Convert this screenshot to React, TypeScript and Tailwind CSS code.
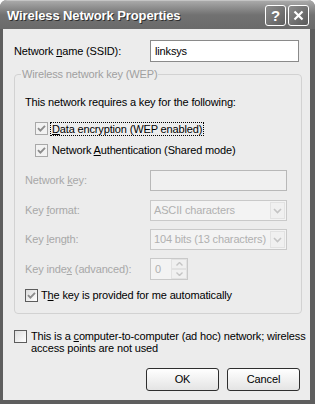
import React from "react";

function Box({ checked, dim }: { checked?: boolean; dim?: boolean }) {
  return (
    <div
      className={
        dim
          ? "w-[13px] h-[13px] shrink-0 border border-[#a8a8a8] bg-[#f2f2f2] flex items-center justify-center"
          : "w-[13px] h-[13px] shrink-0 border border-[#5c5c5c] bg-gradient-to-br from-[#dcdcdc] to-white flex items-center justify-center"
      }
    >
      {checked && (
        <svg width="9" height="9" viewBox="0 0 9 9">
          <path d="M1 4.2 L3.4 6.6 L8 1.8" stroke="#8c8c8c" strokeWidth="1.9" fill="none" />
        </svg>
      )}
    </div>
  );
}

function Combo({ text }: { text: string }) {
  return (
    <div className="w-[137px] h-[21px] border border-[#c9c9c9] bg-[#f3f3f3] flex items-center">
      <span className="flex-1 pl-[3px] text-[#b0b0b0] whitespace-nowrap overflow-hidden">{text}</span>
      <div className="w-[15px] h-[17px] mr-[1px] shrink-0 border border-[#e2e2e2] bg-[#f0f0f0] flex items-center justify-center">
        <svg width="9" height="6" viewBox="0 0 9 6">
          <path d="M1 1 L4.5 4.5 L8 1" stroke="#c4c4c4" strokeWidth="1.6" fill="none" />
        </svg>
      </div>
    </div>
  );
}

export default function App() {
  return (
    <div
      className="w-[315px] h-[404px] flex flex-col rounded-t-[7px] overflow-hidden bg-[#5e5e5e] text-[11px] leading-[13px] tracking-[-0.15px] text-black"
      style={{ fontFamily: '"Liberation Sans", Arial, sans-serif' }}
    >
      {/* Title bar */}
      <div className="h-[29px] shrink-0 flex items-center justify-between pl-[7px] pr-[6px] bg-gradient-to-b from-[#a9a9a9] via-[#717171] to-[#6a6a6a] border-t border-[#c4c4c4]">
        <span className="text-white font-bold text-[13px] [text-shadow:1px_1px_0_#2e2e2e] tracking-[-0.1px]">
          Wireless Network Properties
        </span>
        <div className="flex gap-[2px]">
          <div className="w-[21px] h-[21px] rounded-[3px] border border-white bg-gradient-to-br from-[#8c8c8c] to-[#5e5e5e] flex items-center justify-center">
            <span className="text-white font-bold text-[15px] leading-none">?</span>
          </div>
          <div className="w-[21px] h-[21px] rounded-[3px] border border-white bg-gradient-to-br from-[#8c8c8c] to-[#5a5a5a] flex items-center justify-center">
            <svg width="11" height="11" viewBox="0 0 11 11">
              <path d="M1.5 1.5 L9.5 9.5 M9.5 1.5 L1.5 9.5" stroke="white" strokeWidth="2.2" />
            </svg>
          </div>
        </div>
      </div>

      {/* Body */}
      <div className="flex-1 ml-[3px] mr-[5px] mb-[4px] bg-[#ececec] pt-[11px] pl-[11px] pr-[10px] flex flex-col">
        <div className="flex items-center h-[22px]">
          <span className="w-[136px]">
            Network <span className="underline">n</span>ame (SSID):
          </span>
          <div className="w-[149px] h-[22px] border border-[#8a8a8a] bg-white flex items-center pl-[4px]">
            linksys
          </div>
        </div>

        <fieldset className="mt-[6px] w-[288px] border border-[#d2d2d2] rounded-[4px] pl-[10px] pr-[14px] pb-[11px]">
          <legend className="-ml-[4px] px-[1px] text-[#a0a0a0]">Wireless network key (WEP)</legend>

          <div className="mt-[15px]">This network requires a key for the following:</div>

          <div className="mt-[13px] ml-[10px] flex items-center h-[13px]">
            <Box checked dim />
            <span className="ml-[2px] px-[1px] border border-dotted border-black leading-[12px]">
              <span className="underline">D</span>ata encryption (WEP enabled)
            </span>
          </div>

          <div className="mt-[9px] ml-[10px] flex items-center h-[13px]">
            <Box checked dim />
            <span className="ml-[4px]">
              Network <span className="underline">A</span>uthentication (Shared mode)
            </span>
          </div>

          <div className="mt-[13px] flex items-center justify-between text-[#a8a8a8]">
            <span>
              Network <span className="underline">k</span>ey:
            </span>
            <div className="w-[137px] h-[21px] border border-[#b8b8b8] bg-[#f0f0f0]" />
          </div>

          <div className="mt-[9px] flex items-center justify-between text-[#a8a8a8]">
            <span>
              Key <span className="underline">f</span>ormat:
            </span>
            <Combo text="ASCII characters" />
          </div>

          <div className="mt-[8px] flex items-center justify-between text-[#a8a8a8]">
            <span>
              Key <span className="underline">l</span>ength:
            </span>
            <Combo text="104 bits (13 characters)" />
          </div>

          <div className="mt-[8px] flex items-center text-[#a8a8a8]">
            <span className="w-[125px]">
              Key inde<span className="underline">x</span> (advanced):
            </span>
            <div className="w-[38px] h-[22px] border border-[#c9c9c9] bg-[#f3f3f3] flex">
              <span className="flex-1 pl-[4px] flex items-center text-[#b0b0b0]">0</span>
              <div className="w-[16px] flex flex-col">
                <div className="flex-1 border border-[#e2e2e2] bg-[#f0f0f0] flex items-center justify-center">
                  <svg width="7" height="4" viewBox="0 0 7 4">
                    <path d="M0.5 3.5 L3.5 0.5 L6.5 3.5" stroke="#c4c4c4" strokeWidth="1.4" fill="none" />
                  </svg>
                </div>
                <div className="flex-1 border border-[#e2e2e2] bg-[#f0f0f0] flex items-center justify-center">
                  <svg width="7" height="4" viewBox="0 0 7 4">
                    <path d="M0.5 0.5 L3.5 3.5 L6.5 0.5" stroke="#c4c4c4" strokeWidth="1.4" fill="none" />
                  </svg>
                </div>
              </div>
            </div>
          </div>

          <div className="mt-[9px] flex items-center h-[13px]">
            <Box checked />
            <span className="ml-[3px]">
              T<span className="underline">h</span>e key is provided for me automatically
            </span>
          </div>
        </fieldset>

        <div className="mt-[16px] flex items-start">
          <Box />
          <div className="ml-[4px] leading-[12px] whitespace-nowrap">
            <div>
              This is a <span className="underline">c</span>omputer-to-computer (ad hoc) network; wireless
            </div>
            <div>access points are not used</div>
          </div>
        </div>

        <div className="mt-[14px] flex justify-end gap-[8px]">
          <div className="w-[73px] h-[23px] rounded-[3px] border border-[#2e2e2e] bg-gradient-to-b from-white to-[#e4e4e4] flex items-center justify-center">
            OK
          </div>
          <div className="w-[73px] h-[23px] rounded-[3px] border border-[#2e2e2e] bg-gradient-to-b from-white to-[#e4e4e4] flex items-center justify-center">
            Cancel
          </div>
        </div>
      </div>
    </div>
  );
}
